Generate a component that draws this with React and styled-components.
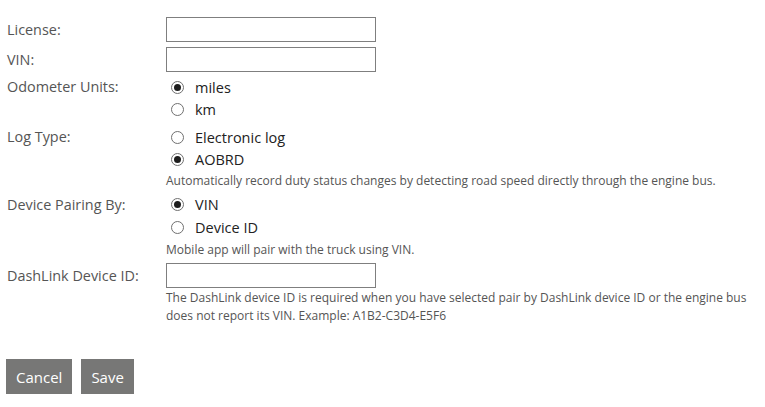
import React from "react";
import styled, { createGlobalStyle } from "styled-components";

const Global = createGlobalStyle`
  html, body { margin: 0; padding: 0; background: #fff; }
  body { font-family: "Open Sans", "Noto Sans", Arial, sans-serif; }
`;

const Page = styled.form`
  padding: 17px 0 0 7px;
  width: 758px;
`;

const Row = styled.div`
  display: grid;
  grid-template-columns: 159px 1fr;
  margin-bottom: ${(p) => p.$gap ?? 6}px;
`;

const Label = styled.label`
  font-size: 14.4px;
  color: #555;
  line-height: ${(p) => p.$lh || 22}px;
`;

const Content = styled.div`
  display: flex;
  flex-direction: column;
`;

const TextInput = styled.input`
  box-sizing: border-box;
  width: 210px;
  height: 25px;
  border: 1px solid #7f7f7f;
  margin: 0;
  padding: 2px 4px;
  font: inherit;
  font-size: 13px;
  outline: none;
`;

const Option = styled.label`
  display: flex;
  align-items: center;
  height: ${(p) => p.$h || 22}px;
  font-size: 14.5px;
  color: #222;
`;

const Radio = styled.input.attrs({ type: "radio" })`
  appearance: none;
  -webkit-appearance: none;
  box-sizing: border-box;
  width: 13px;
  height: 13px;
  margin: 0 11px 0 5px;
  border: 1px solid #707070;
  border-radius: 50%;
  background: #fff;
  display: grid;
  place-content: center;
  &:checked::before {
    content: "";
    width: 7px;
    height: 7px;
    border-radius: 50%;
    background: #1e1e1e;
  }
`;

const Hint = styled.div`
  font-size: 12px;
  line-height: 18px;
  color: #555;
  max-width: 585px;
  margin-top: ${(p) => p.$mt ?? 0}px;
`;

const Actions = styled.div`
  display: flex;
  gap: 9px;
  margin: 34px 0 0 -1px;
`;

const Button = styled.button`
  height: 35px;
  padding: 0 10px;
  border: none;
  background: #777776;
  color: #fff;
  font-family: inherit;
  font-size: 15px;
  cursor: pointer;
`;

export default function App() {
  return (
    <>
      <Global />
      <Page onSubmit={(e) => e.preventDefault()}>
        <Row $gap={5}>
          <Label $lh={25}>License:</Label>
          <Content>
            <TextInput />
          </Content>
        </Row>
        <Row $gap={4}>
          <Label $lh={25}>VIN:</Label>
          <Content>
            <TextInput />
          </Content>
        </Row>
        <Row>
          <Label>Odometer Units:</Label>
          <Content>
            <Option><Radio name="odo" defaultChecked />miles</Option>
            <Option><Radio name="odo" />km</Option>
          </Content>
        </Row>
        <Row $gap={3}>
          <Label>Log Type:</Label>
          <Content>
            <Option><Radio name="log" />Electronic log</Option>
            <Option><Radio name="log" defaultChecked />AOBRD</Option>
            <Hint $mt={2}>Automatically record duty status changes by detecting road speed directly through the engine bus.</Hint>
          </Content>
        </Row>
        <Row $gap={4}>
          <Label $lh={23}>Device Pairing By:</Label>
          <Content>
            <Option $h={23}><Radio name="pair" defaultChecked />VIN</Option>
            <Option $h={23}><Radio name="pair" />Device ID</Option>
            <Hint $mt={2}>Mobile app will pair with the truck using VIN.</Hint>
          </Content>
        </Row>
        <Row $gap={0}>
          <Label $lh={25}>DashLink Device ID:</Label>
          <Content>
            <TextInput />
            <Hint $mt={1}>
              The DashLink device ID is required when you have selected pair by DashLink device ID or the engine bus does not report its VIN. Example: A1B2-C3D4-E5F6
            </Hint>
          </Content>
        </Row>
        <Actions>
          <Button type="button">Cancel</Button>
          <Button type="submit">Save</Button>
        </Actions>
      </Page>
    </>
  );
}
